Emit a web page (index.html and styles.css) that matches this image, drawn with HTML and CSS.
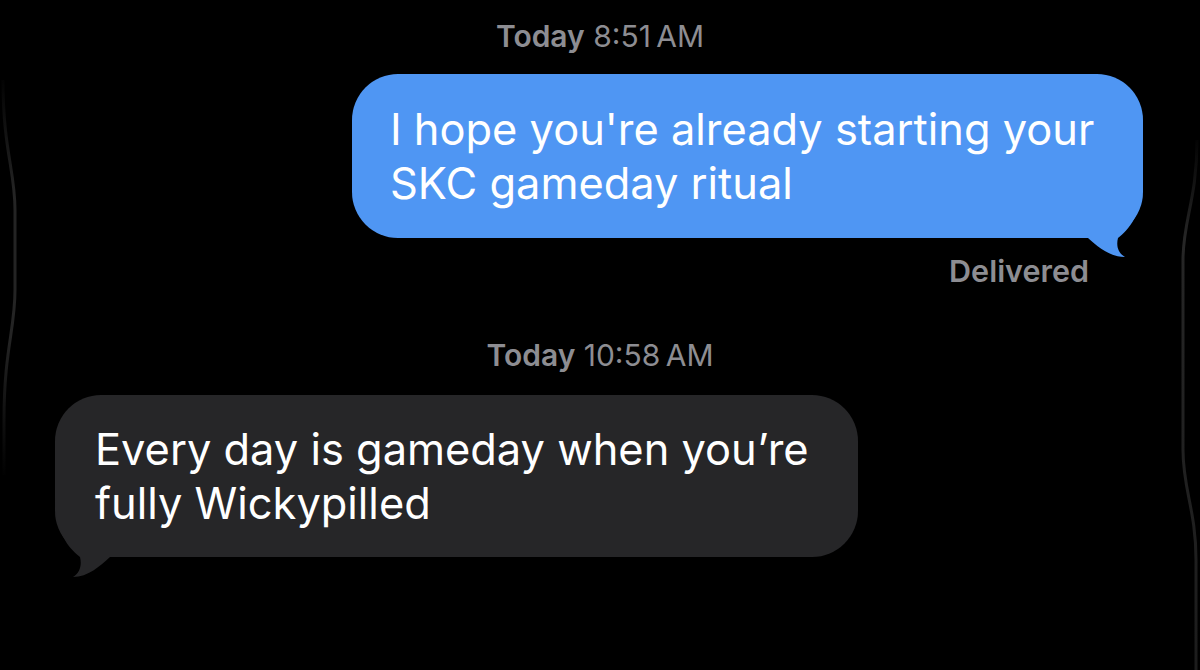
FILE: index.html
```html
<!DOCTYPE html>
<html lang="en">
<head>
<meta charset="utf-8">
<title>Messages</title>
<link rel="stylesheet" href="styles.css">
</head>
<body>
<div class="screen">
  <svg class="edges" width="1200" height="670" viewBox="0 0 1200 670" aria-hidden="true">
    <defs>
      <linearGradient id="fadeL" x1="0" y1="70" x2="0" y2="480" gradientUnits="userSpaceOnUse">
        <stop offset="0" stop-color="#242424" stop-opacity="0"/>
        <stop offset="0.3" stop-color="#242424"/>
        <stop offset="0.65" stop-color="#242424"/>
        <stop offset="1" stop-color="#242424" stop-opacity="0"/>
      </linearGradient>
      <linearGradient id="fadeR" x1="0" y1="130" x2="0" y2="670" gradientUnits="userSpaceOnUse">
        <stop offset="0" stop-color="#262626" stop-opacity="0"/>
        <stop offset="0.2" stop-color="#262626"/>
        <stop offset="1" stop-color="#1c1c1c"/>
      </linearGradient>
    </defs>
    <path d="M3,80 C3,150 15,170 15,210 L15,290 C15,330 4,350 4,420 L4,475" fill="none" stroke="url(#fadeL)" stroke-width="3"/>
    <path d="M1197,140 C1197,200 1183,220 1183,260 L1183,450 C1183,490 1196,510 1196,560 L1196,670" fill="none" stroke="url(#fadeR)" stroke-width="3"/>
  </svg>

  <div class="chat">
    <div class="stamp"><span class="day">Today</span> 8:51&#8201;AM</div>

    <div class="bubble sent">
      <div class="text">I hope you're already starting your<br>SKC gameday ritual</div>
      <svg class="tail tail-sent" viewBox="700 100 100 90" width="100" height="90" aria-hidden="true">
        <path d="M791,105 C791,141 776,156 766,164 C764,172 766,179 773,183 C758,183 746,173 736,164 L700,164 L700,105 Z"/>
      </svg>
    </div>

    <div class="status">Delivered</div>

    <div class="stamp stamp-second"><span class="day">Today</span> 10:58&#8201;AM</div>

    <div class="bubble received">
      <div class="text">Every day is gameday when you’re<br>fully Wickypilled</div>
      <svg class="tail tail-received" viewBox="-10 100 100 90" width="100" height="90" aria-hidden="true">
        <path d="M0,103 C0,139 15,154 25,162 C27,170 25,178 18,182 C33,182 45,171 55,162 L90,162 L90,103 Z"/>
      </svg>
    </div>
  </div>
</div>
</body>
</html>
```

FILE: styles.css
```css
* {
  box-sizing: border-box;
}

html, body {
  margin: 0;
  padding: 0;
  background: #000;
}

.screen {
  position: relative;
  width: 1200px;
  height: 670px;
  overflow: hidden;
  background: #000;
  font-family: Inter, "Noto Sans", "Liberation Sans", sans-serif;
}

.edges {
  position: absolute;
  left: 0;
  top: 0;
  pointer-events: none;
}

.chat {
  display: flex;
  flex-direction: column;
  padding-top: 19px;
}

.stamp {
  height: 34px;
  line-height: 34px;
  font-size: 30px;
  color: #8d8d92;
  text-align: center;
  white-space: nowrap;
}

.stamp .day {
  font-weight: 600;
}

.stamp-second {
  margin-top: 50px;
}

.bubble {
  position: relative;
  border-radius: 46px;
  color: #fff;
  font-size: 43.4px;
  line-height: 54px;
  white-space: nowrap;
}

.bubble .text {
  position: relative;
  z-index: 1;
}

.sent {
  align-self: flex-end;
  margin-top: 21px;
  margin-right: 57px;
  width: 791px;
  height: 164px;
  padding: 28px 0 28px 38px;
  background: #4f96f3;
}

.received {
  align-self: flex-start;
  margin-top: 23px;
  margin-left: 55px;
  width: 803px;
  height: 162px;
  padding: 27px 0 27px 40px;
  background: #262628;
}

.tail {
  position: absolute;
  top: 100px;
}

.tail-sent {
  left: 700px;
}

.tail-sent path {
  fill: #4f96f3;
}

.tail-received {
  left: -10px;
}

.tail-received path {
  fill: #262628;
}

.status {
  align-self: flex-end;
  margin-top: 16px;
  margin-right: 111px;
  height: 34px;
  line-height: 34px;
  font-size: 30.5px;
  font-weight: 600;
  color: #8d8d92;
  white-space: nowrap;
}
```
